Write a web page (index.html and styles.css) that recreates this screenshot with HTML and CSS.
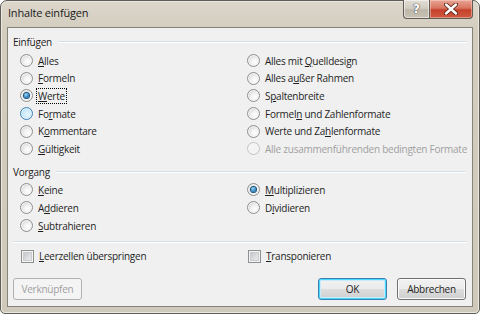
FILE: index.html
```html
<!DOCTYPE html>
<html lang="de">
  <head>
    <meta charset="UTF-8" />
    <meta name="viewport" content="width=device-width, initial-scale=1.0" />
    <title>Inhalte einfügen</title>
    <link rel="stylesheet" href="styles.css">
  </head>
  <body>
    <div class="window">
      <div class="titlebar">
        <span class="title">Inhalte einfügen</span>
        <div class="caption-buttons">
          <span class="cap-btn help">?</span>
          <span class="cap-btn close">
            <svg width="14" height="12" viewBox="0 0 14 12">
              <path d="M2 1.5 L12 10.5 M12 1.5 L2 10.5" stroke="#5a2418" stroke-width="4.2" stroke-linecap="round" fill="none"/>
              <path d="M2 1.5 L12 10.5 M12 1.5 L2 10.5" stroke="#ffffff" stroke-width="2.4" stroke-linecap="round" fill="none"/>
            </svg>
          </span>
        </div>
      </div>

      <div class="client">
        <div class="group-head"><span>Einfügen</span><span class="rule"></span></div>
        <div class="options six">
          <label class="opt"><span class="radio"></span><span><u>A</u>lles</span></label>
          <label class="opt"><span class="radio"></span><span><u>F</u>ormeln</span></label>
          <label class="opt"><span class="radio checked"></span><span class="focus"><u>W</u>erte</span></label>
          <label class="opt"><span class="radio hover"></span><span>Fo<u>r</u>mate</span></label>
          <label class="opt"><span class="radio"></span><span>K<u>o</u>mmentare</span></label>
          <label class="opt"><span class="radio"></span><span><u>G</u>ültigkeit</span></label>
          <label class="opt"><span class="radio"></span><span>Alles mit <u>Q</u>uelldesign</span></label>
          <label class="opt"><span class="radio"></span><span>Alles a<u>u</u>ßer Rahmen</span></label>
          <label class="opt"><span class="radio"></span><span>S<u>p</u>altenbreite</span></label>
          <label class="opt"><span class="radio"></span><span>Formel<u>n</u> und Zahlenformate</span></label>
          <label class="opt"><span class="radio"></span><span>Werte und Za<u>h</u>lenformate</span></label>
          <label class="opt disabled"><span class="radio"></span><span>Alle zusammenführenden bedingten Formate</span></label>
        </div>

        <div class="group-head second"><span>Vorgang</span><span class="rule"></span></div>
        <div class="options three">
          <label class="opt"><span class="radio"></span><span><u>K</u>eine</span></label>
          <label class="opt"><span class="radio"></span><span>A<u>d</u>dieren</span></label>
          <label class="opt"><span class="radio"></span><span><u>S</u>ubtrahieren</span></label>
          <label class="opt"><span class="radio checked"></span><span><u>M</u>ultiplizieren</span></label>
          <label class="opt"><span class="radio"></span><span>D<u>i</u>vidieren</span></label>
        </div>

        <div class="separator"></div>

        <div class="checks">
          <label class="opt"><span class="checkbox"></span><span><u>L</u>eerzellen überspringen</span></label>
          <label class="opt"><span class="checkbox"></span><span><u>T</u>ransponieren</span></label>
        </div>

        <div class="buttons">
          <button class="btn" disabled>Verknüpfen</button>
          <span class="spacer"></span>
          <button class="btn default">OK</button>
          <button class="btn">Abbrechen</button>
        </div>
      </div>
    </div>
  </body>
</html>
```

FILE: styles.css
```css
body {
  margin: 0;
  background-color: #ffffff;
  font-family: "Open Sans", sans-serif;
  font-size: 10px;
  letter-spacing: -0.25px;
  color: #1e1e1e;
}

.window {
  width: 480px;
  height: 314px;
  box-sizing: border-box;
  border: 1px solid #5e5d58;
  border-radius: 7px 7px 5px 5px;
  background: linear-gradient(#dcd7cb 0px, #d3cdbf 30px, #cfc9bb 100%);
  box-shadow: inset 0 0 0 1px #ece8df;
  display: flex;
  flex-direction: column;
}

.titlebar {
  height: 26px;
  display: flex;
  justify-content: space-between;
  align-items: flex-start;
  padding-left: 7px;
}

.title {
  font-size: 11px;
  letter-spacing: -0.2px;
  line-height: 14px;
  margin-top: 5px;
  color: #1a1a1a;
}

.caption-buttons {
  display: flex;
  margin-right: 6px;
  margin-top: -1px;
}

.cap-btn {
  height: 19px;
  box-sizing: border-box;
  display: flex;
  align-items: center;
  justify-content: center;
  border: 1px solid #5f5c55;
  border-top: none;
}

.help {
  width: 26px;
  border-right: none;
  border-radius: 0 0 0 4px;
  background: linear-gradient(#e2ded5 0%, #d2cdc2 45%, #bdb7aa 55%, #c8c2b6 100%);
  box-shadow: inset 0 0 0 1px rgba(255, 255, 255, 0.5);
  color: #ffffff;
  font-family: "DejaVu Sans", sans-serif;
  font-weight: bold;
  font-size: 12px;
  letter-spacing: 0;
  text-shadow: 0 0 1px #555, 0 0 1px #555, 0 0 1px #555;
}

.close {
  width: 44px;
  border-radius: 0 0 4px 0;
  background: linear-gradient(#e9a596 0%, #d8755f 45%, #c4412b 55%, #d05a3f 100%);
  box-shadow: inset 0 0 0 1px rgba(255, 220, 210, 0.45);
}

.client {
  flex: 1;
  margin: 0 6px 6px 6px;
  border: 1px solid #86837a;
  background-color: #f0f0f0;
  display: flex;
  flex-direction: column;
  padding: 7px 6px 6px 5px;
}

.group-head {
  display: flex;
  align-items: center;
  line-height: 14px;
  height: 14px;
}

.group-head .rule {
  flex: 1;
  height: 0;
  border-top: 1px solid #d5dfe5;
  border-bottom: 1px solid #ffffff;
  margin-left: 6px;
}

.group-head.second {
  margin-top: 7px;
}

.options {
  display: grid;
  grid-auto-flow: column;
  grid-template-columns: 227px 1fr;
  padding-left: 7px;
}

.options.six {
  margin-top: 3px;
  grid-template-rows: repeat(6, 17.6px);
}

.options.three {
  margin-top: 2.5px;
  grid-template-rows: repeat(3, 17.8px);
}

.opt {
  display: flex;
  align-items: center;
  gap: 5px;
  line-height: 14px;
  white-space: nowrap;
}

.opt.disabled {
  color: #a0a0a0;
}

.radio {
  width: 13px;
  height: 13px;
  box-sizing: border-box;
  border-radius: 50%;
  border: 1px solid #8e8f8f;
  background: radial-gradient(circle at 62% 62%, #ffffff 0%, #f2f2f2 35%, #d4d4d4 80%, #c6c6c6 100%);
  box-shadow: inset 0 0 0 1px #f6f6f6;
  display: flex;
  align-items: center;
  justify-content: center;
  flex: none;
}

.radio.checked::after {
  content: "";
  width: 5px;
  height: 5px;
  border-radius: 50%;
  background: radial-gradient(circle at 40% 35%, #a7dcf8 0%, #2b86c4 55%, #0d4c7e 100%);
  box-shadow: 0 0 0 1px #1a4f78;
}

.radio.hover {
  border-color: #3c7fb1;
  background: radial-gradient(circle at 60% 60%, #e8f7fe 0%, #c4e8fb 55%, #9fd3f2 100%);
  box-shadow: inset 0 0 0 1px #e6f5fd;
}

.disabled .radio {
  border-color: #c4c4c4;
  background: #f4f4f4;
  box-shadow: none;
}

.focus {
  outline: 1px dotted #000000;
  outline-offset: 0;
  padding: 0 1px;
  margin-left: -1px;
}

.separator {
  margin-top: 7px;
  height: 0;
  border-top: 1px solid #d5dfe5;
  border-bottom: 1px solid #ffffff;
}

.checks {
  display: grid;
  grid-template-columns: 227px 1fr;
  padding-left: 8px;
  margin-top: 6px;
}

.checkbox {
  width: 13px;
  height: 13px;
  box-sizing: border-box;
  border: 1px solid #8e8f8f;
  background: linear-gradient(135deg, #b8bcc1 0%, #dfe0e2 60%, #f2f2f2 100%);
  box-shadow: inset 0 0 0 1px #f4f4f4, inset 0 0 0 2px #c9ccd0;
  flex: none;
}

.buttons {
  margin-top: auto;
  display: flex;
}

.spacer {
  flex: 1;
}

.btn {
  font-family: inherit;
  font-size: 10px;
  letter-spacing: inherit;
  color: #1e1e1e;
  width: 69px;
  height: 22px;
  padding: 0;
  border: 1px solid #707070;
  border-radius: 3px;
  background: linear-gradient(#f2f2f2 0%, #ebebeb 48%, #dddddd 52%, #cfcfcf 100%);
  box-shadow: inset 0 0 0 1px #fcfcfc;
  margin-left: 10px;
}

.btn:first-child {
  margin-left: 0;
}

.btn.default {
  border-color: #3c7fb1;
  box-shadow: inset 0 0 0 1px #48d8fb, inset 0 0 0 2px #c9ecfc;
}

.btn:disabled {
  color: #a0a0a0;
  border-color: #adb2b5;
  background: #f4f4f4;
  box-shadow: none;
}

u {
  text-decoration-thickness: 1px;
  text-underline-offset: 1px;
}
```
